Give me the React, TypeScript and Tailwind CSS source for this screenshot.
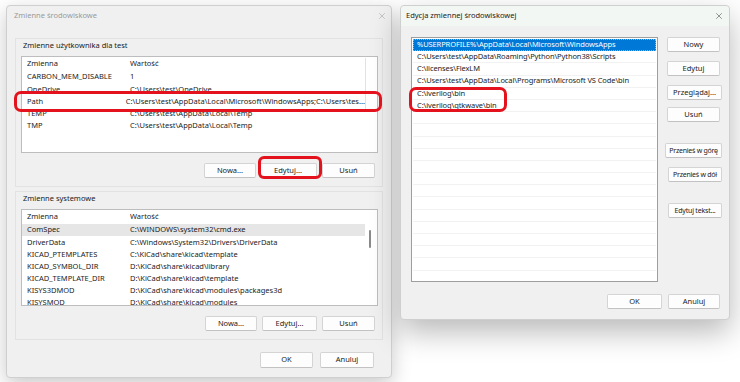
import { X } from "lucide-react";

type Row = { name: string; value: string };

const USER_VARS: Row[] = [
  { name: "CARBON_MEM_DISABLE", value: "1" },
  { name: "OneDrive", value: "C:\\Users\\test\\OneDrive" },
  { name: "Path", value: "C:\\Users\\test\\AppData\\Local\\Microsoft\\WindowsApps;C:\\Users\\tes..." },
  { name: "TEMP", value: "C:\\Users\\test\\AppData\\Local\\Temp" },
  { name: "TMP", value: "C:\\Users\\test\\AppData\\Local\\Temp" },
];

const SYSTEM_VARS: Row[] = [
  { name: "ComSpec", value: "C:\\WINDOWS\\system32\\cmd.exe" },
  { name: "DriverData", value: "C:\\Windows\\System32\\Drivers\\DriverData" },
  { name: "KICAD_PTEMPLATES", value: "C:\\KiCad\\share\\kicad\\template" },
  { name: "KICAD_SYMBOL_DIR", value: "D:\\KiCad\\share\\kicad\\library" },
  { name: "KICAD_TEMPLATE_DIR", value: "D:\\KiCad\\share\\kicad\\template" },
  { name: "KISYS3DMOD", value: "D:\\KiCad\\share\\kicad\\modules\\packages3d" },
  { name: "KISYSMOD", value: "D:\\KiCad\\share\\kicad\\modules" },
];

const PATHS = [
  "%USERPROFILE%\\AppData\\Local\\Microsoft\\WindowsApps",
  "C:\\Users\\test\\AppData\\Roaming\\Python\\Python38\\Scripts",
  "C:\\licenses\\FlexLM",
  "C:\\Users\\test\\AppData\\Local\\Programs\\Microsoft VS Code\\bin",
  "C:\\iverilog\\bin",
  "C:\\iverilog\\gtkwave\\bin",
];

function Btn({ label, className = "" }: { label: string; className?: string }) {
  return (
    <div
      className={`h-[15px] flex items-center justify-center whitespace-nowrap bg-[#fdfdfd] border border-[#d4d4d4] border-b-[#c2c2c2] rounded-[2px] ${className}`}
    >
      {label}
    </div>
  );
}

function VarTable({ rows, height, selected, thumb }: { rows: Row[]; height: string; selected?: number; thumb?: boolean }) {
  return (
    <div className={`relative w-[357px] ${height} bg-white border border-[#bdbdbd] overflow-hidden`}>
      <div className="flex h-[14px] items-center pl-[5px]">
        <span className="w-[103px]">Zmienna</span>
        <span>Wartość</span>
      </div>
      {rows.map((r, i) => (
        <div
          key={r.name}
          className={`flex h-[12.2px] items-center pl-[5px] w-[343px] ${i === selected ? "bg-[#e6e6e6]" : ""}`}
        >
          <span className="w-[103px] whitespace-nowrap">{r.name}</span>
          <span className="whitespace-nowrap">{r.value}</span>
        </div>
      ))}
      {thumb ? (
        <div className="absolute right-[6px] top-[20px] w-[2px] h-[18px] bg-[#8a8a8a] rounded-full" />
      ) : (
        <div className="absolute right-[11px] top-[1px] w-[1px] h-[52px] bg-[#e2e2e2]" />
      )}
    </div>
  );
}

export default function App() {
  return (
    <div className="relative w-[740px] h-[382px] bg-white overflow-hidden font-['Noto_Sans',sans-serif] text-[7.5px] leading-none text-[#1b1b1b]">
      {/* left window */}
      <div className="absolute left-[6px] top-[5px] w-[386px] h-[373px] bg-[#f0f0f0] border border-[#cfcfcf] rounded-[4px] shadow-[0_6px_20px_rgba(0,0,0,0.22)] flex flex-col">
        <div className="h-[20px] flex items-center justify-between pl-[7px] pr-[4px] text-[#9a9a9a]">
          <span>Zmienne środowiskowe</span>
          <X size={10} strokeWidth={1.2} />
        </div>

        <div className="mx-[8px] mt-[12px] border border-[#e2e2e2] px-[5px] pt-[1px] pb-[8px]">
          <div className="h-[12px] flex items-center pl-[2px]">Zmienne użytkownika dla test</div>
          <div className="mt-[4px]">
            <VarTable rows={USER_VARS} height="h-[97px]" />
          </div>
          <div className="mt-[10px] flex justify-end gap-[3px] pr-[2px]">
            <Btn label="Nowa..." className="w-[52px] h-[14px]" />
            <Btn label="Edytuj..." className="w-[58px] h-[14px]" />
            <Btn label="Usuń" className="w-[53px] h-[14px] ml-[2px]" />
          </div>
        </div>

        <div className="mx-[8px] mt-[4px] border border-[#e2e2e2] px-[5px] pt-[1px] pb-[8px]">
          <div className="h-[12px] flex items-center pl-[2px]">Zmienne systemowe</div>
          <div className="mt-[4px]">
            <VarTable rows={SYSTEM_VARS} height="h-[97px]" selected={0} thumb />
          </div>
          <div className="mt-[10px] flex justify-end gap-[5px] pr-[2px]">
            <Btn label="Nowa..." className="w-[52px] h-[14px]" />
            <Btn label="Edytuj..." className="w-[55px] h-[14px]" />
            <Btn label="Usuń" className="w-[53px] h-[14px]" />
          </div>
        </div>

        <div className="mt-[12px] flex justify-end gap-[7px] pr-[17px]">
          <Btn label="OK" className="w-[53px] h-[16px]" />
          <Btn label="Anuluj" className="w-[54px] h-[16px]" />
        </div>
      </div>

      {/* right window */}
      <div className="absolute left-[400px] top-[5px] w-[330px] h-[315px] bg-[#f0f0f0] border border-[#cfcfcf] rounded-[4px] shadow-[0_12px_30px_rgba(0,0,0,0.28)] flex flex-col">
        <div className="h-[20px] flex items-center justify-between pl-[5px] pr-[5px] bg-[#f3f7f4] rounded-t-[4px]">
          <span>Edycja zmiennej środowiskowej</span>
          <X size={10} strokeWidth={1.2} className="text-[#333]" />
        </div>
        <div className="flex mt-[11px] pl-[10px]">
          <div className="w-[247px] h-[245px] bg-white border border-[#9e9e9e] p-[1px] overflow-hidden">
            {PATHS.map((p, i) => (
              <div
                key={p}
                className={`h-[12.2px] flex items-center pl-[4px] whitespace-nowrap tracking-[-0.1px] ${
                  i === 0 ? "bg-[#0078d7] text-white outline outline-1 outline-dotted outline-[#7fb8ec] -outline-offset-1" : "border-b border-[#f2f2f2]"
                }`}
              >
                {p}
              </div>
            ))}
            {Array.from({ length: 16 }).map((_, i) => (
              <div key={i} className="h-[12.2px] border-b border-[#f2f2f2]" />
            ))}
          </div>
          <div className="ml-[6px] w-[58px] flex flex-col items-end">
            <Btn label="Nowy" className="w-[53px] mr-[2px]" />
            <Btn label="Edytuj" className="w-[53px] mr-[2px] mt-[9px]" />
            <Btn label="Przeglądaj..." className="w-[55px] mt-[9px]" />
            <Btn label="Usuń" className="w-[53px] mr-[2px] mt-[7px]" />
            <Btn label="Przenieś w górę" className="w-[57px] mt-[21px] tracking-[-0.25px] text-[7px]" />
            <Btn label="Przenieś w dół" className="w-[54px] mt-[9px] tracking-[-0.25px] text-[7px]" />
            <Btn label="Edytuj tekst..." className="w-[54px] mt-[21px] tracking-[-0.2px] text-[7px]" />
          </div>
        </div>
        <div className="mt-[12px] flex justify-end gap-[6px] pr-[9px]">
          <Btn label="OK" className="w-[55px] border-[#0067c0] border-b-[#0067c0] shadow-[inset_0_0_0_1px_#ffffff]" />
          <Btn label="Anuluj" className="w-[52px]" />
        </div>
      </div>

      {/* red annotations */}
      <div className="absolute left-[14px] top-[91px] w-[368px] h-[21px] border-[3px] border-[#e3121c] rounded-[7px]" />
      <div className="absolute left-[258px] top-[156px] w-[64px] h-[23px] border-[3px] border-[#e3121c] rounded-[6px]" />
      <div className="absolute left-[409px] top-[87px] w-[98px] h-[25px] border-[3px] border-[#e3121c] rounded-[7px]" />
    </div>
  );
}
